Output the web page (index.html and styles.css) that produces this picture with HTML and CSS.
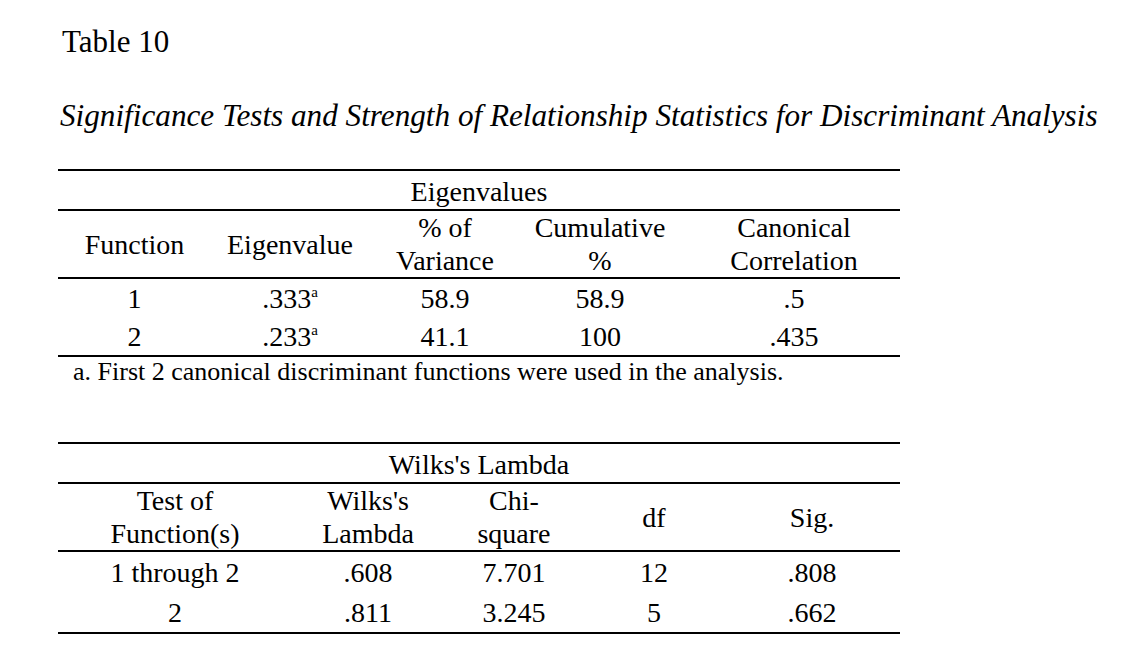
FILE: index.html
```html
<!DOCTYPE html>
<html lang="en">
<head>
<meta charset="utf-8">
<title>Table 10</title>
<link rel="stylesheet" href="styles.css">
</head>
<body>
<div class="page">
  <p class="label">Table 10</p>
  <p class="title">Significance Tests and Strength of Relationship Statistics for Discriminant Analysis</p>

  <table class="stats eigen">
    <colgroup>
      <col class="c153"><col class="c158"><col class="c152"><col class="c158"><col class="c221">
    </colgroup>
    <thead>
      <tr class="caption-row"><th colspan="5">Eigenvalues</th></tr>
      <tr class="head">
        <th>Function</th>
        <th>Eigenvalue</th>
        <th>% of<br>Variance</th>
        <th>Cumulative<br>%</th>
        <th class="shift">Canonical<br>Correlation</th>
      </tr>
    </thead>
    <tbody>
      <tr><td>1</td><td>.333<sup>a</sup></td><td>58.9</td><td>58.9</td><td class="shift">.5</td></tr>
      <tr><td>2</td><td>.233<sup>a</sup></td><td>41.1</td><td>100</td><td class="shift">.435</td></tr>
    </tbody>
  </table>
  <p class="note">a. First 2 canonical discriminant functions were used in the analysis.</p>

  <table class="stats wilks">
    <colgroup>
      <col class="c234"><col class="c152"><col class="c140"><col class="c140"><col class="c176">
    </colgroup>
    <thead>
      <tr class="caption-row"><th colspan="5">Wilks's Lambda</th></tr>
      <tr class="head">
        <th>Test of<br>Function(s)</th>
        <th>Wilks's<br>Lambda</th>
        <th>Chi-<br>square</th>
        <th>df</th>
        <th>Sig.</th>
      </tr>
    </thead>
    <tbody>
      <tr class="r40"><td>1 through 2</td><td>.608</td><td>7.701</td><td>12</td><td>.808</td></tr>
      <tr class="r40"><td>2</td><td>.811</td><td>3.245</td><td>5</td><td>.662</td></tr>
    </tbody>
  </table>
</div>
</body>
</html>
```

FILE: styles.css
```css
html, body {
  margin: 0;
  padding: 0;
  background: #ffffff;
}

.page {
  padding: 25px 0 0 58px;
  font-family: "Liberation Serif", "Times New Roman", serif;
  color: #000000;
}

.label {
  margin: 0 0 40px 4px;
  font-size: 31px;
  line-height: 34px;
}

.title {
  margin: 0 0 36px 2px;
  font-size: 31.2px;
  line-height: 34px;
  font-style: italic;
}

.stats {
  width: 842px;
  table-layout: fixed;
  border-collapse: separate;
  border-spacing: 0;
  border-top: 2px solid #000000;
  font-size: 28px;
}

.c153 { width: 153px; }
.c158 { width: 158px; }
.c152 { width: 152px; }
.c221 { width: 221px; }
.c234 { width: 234px; }
.c140 { width: 140px; }
.c176 { width: 176px; }

.stats th,
.stats td {
  padding: 0;
  font-weight: normal;
  text-align: center;
  vertical-align: middle;
}

.stats .caption-row th {
  height: 35px;
  line-height: 33px;
  padding-top: 3px;
  border-bottom: 2px solid #000000;
}

.stats .head th {
  height: 65px;
  line-height: 33px;
  border-bottom: 2px solid #000000;
}

.stats td {
  height: 38px;
  line-height: 33px;
}

.stats tbody tr:last-child td {
  border-bottom: 2px solid #000000;
}

.stats .r40 td {
  height: 40px;
}

.stats .shift {
  padding-left: 9px;
}

.stats sup {
  font-size: 15px;
  line-height: 0;
  vertical-align: 11px;
}

.note {
  margin: 0 0 55px 15px;
  font-size: 26px;
  line-height: 30px;
}
```
